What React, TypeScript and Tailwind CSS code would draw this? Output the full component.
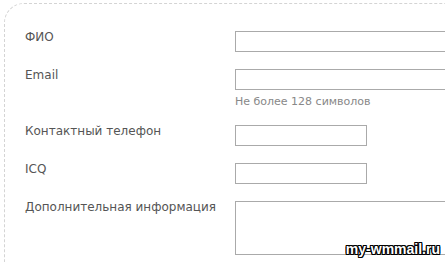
const FIELD_LABEL = "text-[12px] leading-[15px] text-[#555] w-[210px] shrink-0 -mt-[1px]";
const INPUT = "block h-[21px] border border-[#aaa] bg-white outline-none";

export default function App() {
  return (
    <div className="relative w-[445px] h-[262px] overflow-hidden bg-white font-['DejaVu_Sans',sans-serif]">
      <div className="ml-[4px] mt-[3px] w-[480px] h-[300px] border-l border-t border-dashed border-[#d4d4d4] rounded-tl-[20px] pl-[20px] pt-[27px]">
        <div className="flex items-start mb-[17px]">
          <label className={FIELD_LABEL}>ФИО</label>
          <input type="text" className={`${INPUT} w-[300px]`} />
        </div>

        <div className="flex items-start mb-[15px]">
          <label className={FIELD_LABEL}>Email</label>
          <div>
            <input type="text" className={`${INPUT} w-[300px]`} />
            <div className="mt-[4px] text-[11px] leading-[16px] text-[#888]">
              Не более 128 символов
            </div>
          </div>
        </div>

        <div className="flex items-start mb-[17px]">
          <label className={FIELD_LABEL}>Контактный телефон</label>
          <input type="text" className={`${INPUT} w-[132px]`} />
        </div>

        <div className="flex items-start mb-[17px]">
          <label className={FIELD_LABEL}>ICQ</label>
          <input type="text" className={`${INPUT} w-[132px]`} />
        </div>

        <div className="flex items-start">
          <label className={FIELD_LABEL}>Дополнительная информация</label>
          <textarea className="block h-[54px] w-[300px] border border-[#aaa] bg-white outline-none resize-none" />
        </div>
      </div>

      {/* watermark */}
      <div className="absolute right-[5px] bottom-[5px] font-['Liberation_Sans',sans-serif] text-[14px] leading-[16px] font-bold text-white [text-shadow:-1px_-1px_0_#000,1px_-1px_0_#000,-1px_1px_0_#000,1px_1px_0_#000,0_1px_0_#000,0_-1px_0_#000,1px_0_0_#000,-1px_0_0_#000]">
        my-wmmail.ru
      </div>
    </div>
  );
}
